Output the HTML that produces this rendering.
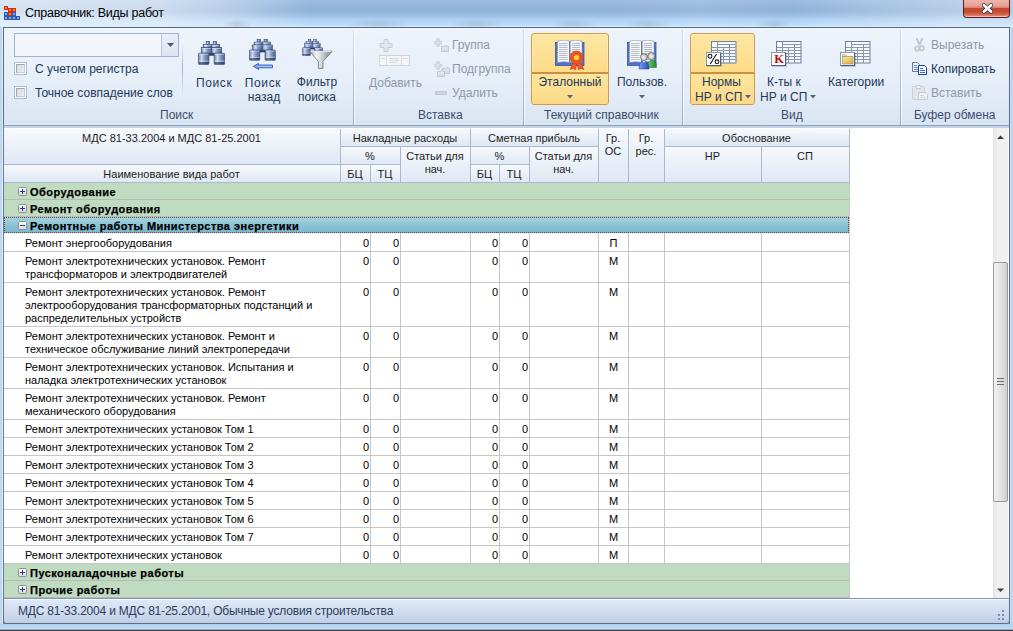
<!DOCTYPE html><html><head><meta charset="utf-8"><style>
*{margin:0;padding:0;box-sizing:border-box}
html,body{width:1013px;height:631px;overflow:hidden;background:#b9d1ec;font-family:"Liberation Sans",sans-serif}
.a{position:absolute}
</style></head><body>
<div class="a" style="left:0;top:0;width:1013px;height:28px;background:linear-gradient(#9dbbe0 0,#8fb0d7 38%,#9cbde3 55%,#b2d2f4 72%,#bcdbf9 88%,#c4e0fa 93%,#eaf3fc 96%,#eaf3fc 100%)"></div>
<div class="a" style="left:0;top:0;width:1013px;height:26px;background:linear-gradient(90deg,rgba(240,246,252,.72) 0,rgba(240,246,252,.62) 160px,rgba(240,246,252,.35) 240px,rgba(240,246,252,0) 310px,rgba(240,246,252,0) 600px,rgba(240,246,252,.1) 700px,rgba(240,246,252,0) 790px,rgba(240,246,252,.2) 870px,rgba(240,246,252,.4) 960px,rgba(240,246,252,.35) 1013px)"></div>
<div class="a" style="left:0;top:27px;width:4px;height:604px;background:linear-gradient(90deg,#c4daf2 0,#b8d3f0 2px,#e2eefa 2px,#e2eefa 3px,#5f6f85 3px)"></div>
<div class="a" style="left:1009px;top:27px;width:4px;height:604px;background:linear-gradient(90deg,#5f6f85 0,#5f6f85 25%,#e0ecf8 26%,#b8d4f2 50%,#bcd6f2)"></div>
<div class="a" style="left:0;top:624px;width:1013px;height:7px;background:linear-gradient(#b6d3f2,#b8d6f5 60%,#d8e8f8 72%,#5a6470 86%,#1c1c1c 100%)"></div>
<div class="a" style="left:222px;top:19px;width:30px;height:9px;background:radial-gradient(ellipse at 50% 60%,rgba(70,90,120,.18),rgba(70,90,120,0) 70%)"></div>
<div class="a" style="left:345px;top:19px;width:67px;height:9px;background:radial-gradient(ellipse at 50% 60%,rgba(70,90,120,.18),rgba(70,90,120,0) 70%)"></div>
<div class="a" style="left:448px;top:19px;width:57px;height:9px;background:radial-gradient(ellipse at 50% 60%,rgba(70,90,120,.18),rgba(70,90,120,0) 70%)"></div>
<div class="a" style="left:550px;top:19px;width:48px;height:9px;background:radial-gradient(ellipse at 50% 60%,rgba(70,90,120,.18),rgba(70,90,120,0) 70%)"></div>
<div class="a" style="left:622px;top:19px;width:50px;height:9px;background:radial-gradient(ellipse at 50% 60%,rgba(70,90,120,.18),rgba(70,90,120,0) 70%)"></div>
<div class="a" style="left:755px;top:19px;width:37px;height:9px;background:radial-gradient(ellipse at 50% 60%,rgba(70,90,120,.18),rgba(70,90,120,0) 70%)"></div>
<svg class="a" style="left:0;top:0" width="24" height="24"><rect x="4.5" y="6.5" width="3" height="3" fill="#ff7a55" stroke="#d2300c"/><rect x="8.5" y="8.5" width="3" height="3" fill="#ff7a55" stroke="#d2300c"/><rect x="12.5" y="8.5" width="3" height="3" fill="#ff7a55" stroke="#d2300c"/><rect x="4.5" y="12.5" width="3" height="3" fill="#7fa8ec" stroke="#2c5cb8"/><rect x="8.5" y="12.5" width="3" height="3" fill="#ff7a55" stroke="#d2300c"/><rect x="12.5" y="12.5" width="3" height="3" fill="#7fa8ec" stroke="#2c5cb8"/><rect x="4.5" y="16.5" width="3" height="3" fill="#7fa8ec" stroke="#2c5cb8"/><rect x="8.5" y="16.5" width="3" height="3" fill="#7fa8ec" stroke="#2c5cb8"/><rect x="12.5" y="16.5" width="3" height="3" fill="#7fa8ec" stroke="#2c5cb8"/><rect x="16.5" y="16.5" width="3" height="3" fill="#7fa8ec" stroke="#2c5cb8"/></svg>
<div class="a" style="left:25px;top:5.67px;font-size:12.5px;line-height:15px;color:#000;white-space:nowrap;letter-spacing:-0.25px;">Справочник: Виды работ</div>
<div class="a" style="left:963px;top:0;width:47px;height:18px;border:1px solid #5a1e18;border-top:none;border-radius:0 0 4px 4px;background:linear-gradient(#efb4ab 0,#e6a096 35%,#d98272 45%,#c9472e 50%,#c44a30 70%,#d8705c 88%,#e8a090 100%);box-shadow:inset 0 -1px 0 rgba(255,220,210,.6)"></div>
<svg class="a" style="left:980px;top:2px" width="15" height="13" viewBox="0 0 15 13"><path d="M4 3.3L11 9.5M11 3.3L4 9.5" stroke="#3a3f50" stroke-width="4.4" stroke-linecap="round"/><path d="M4 3.3L11 9.5M11 3.3L4 9.5" stroke="#fafafa" stroke-width="2.8" stroke-linecap="round"/></svg>
<div class="a" style="left:3px;top:27px;width:1007px;height:99px;border:1px solid #5c6a7e;border-bottom:1px solid #8ea3c0;background:linear-gradient(#eef4fb 0,#e6eef8 55%,#dae5f3 100%)"></div>
<div class="a" style="left:4px;top:126px;width:1005px;height:3px;background:#c5d2e3"></div>
<div class="a" style="left:353px;top:30px;width:1px;height:95px;background:linear-gradient(#d2dcea,#b4c3d8 50%,#9aadc6)"></div>
<div class="a" style="left:354px;top:30px;width:1px;height:95px;background:rgba(255,255,255,.75)"></div>
<div class="a" style="left:523px;top:30px;width:1px;height:95px;background:linear-gradient(#d2dcea,#b4c3d8 50%,#9aadc6)"></div>
<div class="a" style="left:524px;top:30px;width:1px;height:95px;background:rgba(255,255,255,.75)"></div>
<div class="a" style="left:682px;top:30px;width:1px;height:95px;background:linear-gradient(#d2dcea,#b4c3d8 50%,#9aadc6)"></div>
<div class="a" style="left:683px;top:30px;width:1px;height:95px;background:rgba(255,255,255,.75)"></div>
<div class="a" style="left:900px;top:30px;width:1px;height:95px;background:linear-gradient(#d2dcea,#b4c3d8 50%,#9aadc6)"></div>
<div class="a" style="left:901px;top:30px;width:1px;height:95px;background:rgba(255,255,255,.75)"></div>
<div class="a" style="left:14px;top:33px;width:165px;height:24px;border:1px solid #a3b3c9;background:#f2f6fc"></div>
<div class="a" style="left:161px;top:34px;width:17px;height:22px;border-left:1px solid #b9c6d8;background:linear-gradient(#e9eff7,#dce5f1)"></div>
<svg class="a" style="left:167px;top:43px" width="8" height="5"><path d="M0 0H7L3.5 4Z" fill="#4a5672"/></svg>
<div class="a" style="left:14px;top:62px;width:13px;height:13px;border:1px solid #a6bedc;background:#fdfdfe"></div>
<div class="a" style="left:16px;top:64px;width:9px;height:9px;border:1px solid #a0a6b0;border-right-color:#c6cad0;border-bottom-color:#c6cad0;background:linear-gradient(135deg,#d6d9de,#eceef1)"></div>
<div class="a" style="left:14px;top:86px;width:13px;height:13px;border:1px solid #a6bedc;background:#fdfdfe"></div>
<div class="a" style="left:16px;top:88px;width:9px;height:9px;border:1px solid #a0a6b0;border-right-color:#c6cad0;border-bottom-color:#c6cad0;background:linear-gradient(135deg,#d6d9de,#eceef1)"></div>
<div class="a" style="left:35px;top:61.84px;font-size:12px;line-height:14px;color:#1e395b;white-space:nowrap;">С учетом регистра</div>
<div class="a" style="left:35px;top:85.84px;font-size:12px;line-height:14px;color:#1e395b;white-space:nowrap;">Точное совпадение слов</div>
<div class="a" style="left:182px;top:43px;width:1px;height:52px;background:linear-gradient(rgba(150,170,200,0),#a4b4cc 45%,#a4b4cc 55%,rgba(150,170,200,0))"></div>
<div class="a" style="left:160px;top:108.34px;font-size:12px;line-height:14px;color:#3d4c6e;white-space:nowrap;">Поиск</div>
<svg class="a" style="left:198px;top:41px" width="27.0" height="24.0" viewBox="0 0 27 24" preserveAspectRatio="none">
<defs><linearGradient id="bn1" x1="0" x2="1"><stop offset="0" stop-color="#6a80b0"/><stop offset=".3" stop-color="#d3ddef"/><stop offset=".55" stop-color="#8ea2c8"/><stop offset="1" stop-color="#4a5f90"/></linearGradient></defs>
<g fill="url(#bn1)" stroke="#3b4b78" stroke-width=".7">
<rect x="8.2" y="0.4" width="3.3" height="3"/><rect x="15.2" y="0.4" width="3.3" height="3"/>
<rect x="5.2" y="3.4" width="8.2" height="3.2"/><rect x="13.4" y="3.4" width="8.3" height="3.2"/>
<rect x="3.3" y="6.6" width="10.1" height="5.6"/><rect x="13.4" y="6.6" width="10.2" height="5.6"/>
<rect x="0.4" y="12.2" width="10.5" height="11.3" rx="1"/><rect x="16.2" y="12.2" width="10.5" height="11.3" rx="1"/>
</g>
<rect x="10.9" y="12.2" width="5.3" height="2.5" fill="#2e3c66"/>
<g fill="#e8eef8" opacity=".55"><rect x="6" y="3.9" width="7" height=".9"/><rect x="14" y="3.9" width="7" height=".9"/><rect x="4" y="7.1" width="9" height=".9"/><rect x="14" y="7.1" width="9" height=".9"/><rect x="1" y="12.8" width="9.5" height="1"/><rect x="16.8" y="12.8" width="9.5" height="1"/><rect x="1" y="19.6" width="9.5" height="1"/><rect x="16.8" y="19.6" width="9.5" height="1"/></g>
<g fill="#1f2a50" opacity=".6"><rect x="1" y="21" width="9.5" height="2"/><rect x="16.8" y="21" width="9.5" height="2"/></g>
</svg>
<div class="a" style="left:196px;top:75.54px;font-size:12px;line-height:14px;color:#1e395b;white-space:nowrap;letter-spacing:0.6px;">Поиск</div>
<svg class="a" style="left:249px;top:39px" width="26.7" height="21.8" viewBox="0 0 27 24" preserveAspectRatio="none">
<defs><linearGradient id="bn2" x1="0" x2="1"><stop offset="0" stop-color="#6a80b0"/><stop offset=".3" stop-color="#d3ddef"/><stop offset=".55" stop-color="#8ea2c8"/><stop offset="1" stop-color="#4a5f90"/></linearGradient></defs>
<g fill="url(#bn2)" stroke="#3b4b78" stroke-width=".7">
<rect x="8.2" y="0.4" width="3.3" height="3"/><rect x="15.2" y="0.4" width="3.3" height="3"/>
<rect x="5.2" y="3.4" width="8.2" height="3.2"/><rect x="13.4" y="3.4" width="8.3" height="3.2"/>
<rect x="3.3" y="6.6" width="10.1" height="5.6"/><rect x="13.4" y="6.6" width="10.2" height="5.6"/>
<rect x="0.4" y="12.2" width="10.5" height="11.3" rx="1"/><rect x="16.2" y="12.2" width="10.5" height="11.3" rx="1"/>
</g>
<rect x="10.9" y="12.2" width="5.3" height="2.5" fill="#2e3c66"/>
<g fill="#e8eef8" opacity=".55"><rect x="6" y="3.9" width="7" height=".9"/><rect x="14" y="3.9" width="7" height=".9"/><rect x="4" y="7.1" width="9" height=".9"/><rect x="14" y="7.1" width="9" height=".9"/><rect x="1" y="12.8" width="9.5" height="1"/><rect x="16.8" y="12.8" width="9.5" height="1"/><rect x="1" y="19.6" width="9.5" height="1"/><rect x="16.8" y="19.6" width="9.5" height="1"/></g>
<g fill="#1f2a50" opacity=".6"><rect x="1" y="21" width="9.5" height="2"/><rect x="16.8" y="21" width="9.5" height="2"/></g>
</svg>
<svg class="a" style="left:253px;top:63px" width="20" height="7" viewBox="0 0 20 7"><path d="M0.4 3.3L5.5 0.4V2H19.5V4.8H5.5V6.4Z" fill="#7aa0ea" stroke="#2250b8" stroke-width=".8"/><path d="M5 3.4H19" stroke="#c8d8f8" stroke-width=".7"/></svg>
<div class="a" style="left:244px;top:75.54px;font-size:12px;line-height:14px;color:#1e395b;white-space:nowrap;letter-spacing:0.6px;width:38px;text-align:center;">Поиск</div>
<div class="a" style="left:245px;top:90.34px;font-size:12px;line-height:14px;color:#1e395b;white-space:nowrap;width:38px;text-align:center;">назад</div>
<svg class="a" style="left:302px;top:39px" width="20.8" height="17.0" viewBox="0 0 27 24" preserveAspectRatio="none">
<defs><linearGradient id="bn3" x1="0" x2="1"><stop offset="0" stop-color="#6a80b0"/><stop offset=".3" stop-color="#d3ddef"/><stop offset=".55" stop-color="#8ea2c8"/><stop offset="1" stop-color="#4a5f90"/></linearGradient></defs>
<g fill="url(#bn3)" stroke="#3b4b78" stroke-width=".7">
<rect x="8.2" y="0.4" width="3.3" height="3"/><rect x="15.2" y="0.4" width="3.3" height="3"/>
<rect x="5.2" y="3.4" width="8.2" height="3.2"/><rect x="13.4" y="3.4" width="8.3" height="3.2"/>
<rect x="3.3" y="6.6" width="10.1" height="5.6"/><rect x="13.4" y="6.6" width="10.2" height="5.6"/>
<rect x="0.4" y="12.2" width="10.5" height="11.3" rx="1"/><rect x="16.2" y="12.2" width="10.5" height="11.3" rx="1"/>
</g>
<rect x="10.9" y="12.2" width="5.3" height="2.5" fill="#2e3c66"/>
<g fill="#e8eef8" opacity=".55"><rect x="6" y="3.9" width="7" height=".9"/><rect x="14" y="3.9" width="7" height=".9"/><rect x="4" y="7.1" width="9" height=".9"/><rect x="14" y="7.1" width="9" height=".9"/><rect x="1" y="12.8" width="9.5" height="1"/><rect x="16.8" y="12.8" width="9.5" height="1"/><rect x="1" y="19.6" width="9.5" height="1"/><rect x="16.8" y="19.6" width="9.5" height="1"/></g>
<g fill="#1f2a50" opacity=".6"><rect x="1" y="21" width="9.5" height="2"/><rect x="16.8" y="21" width="9.5" height="2"/></g>
</svg>
<svg class="a" style="left:309px;top:50px" width="24" height="19" viewBox="0 0 24 19"><defs><linearGradient id="fn" x1="0" x2="1"><stop offset="0" stop-color="#8e949c"/><stop offset=".3" stop-color="#f4f6f8"/><stop offset=".6" stop-color="#c4c8cd"/><stop offset="1" stop-color="#7a8089"/></linearGradient></defs>
<path d="M0.5 1.2H23.2L14 11.5V18.4H9.4V11.5Z" fill="url(#fn)" stroke="#6e747c" stroke-width=".8"/><path d="M1.5 1.6H22.2" stroke="#fff" stroke-width=".8"/></svg>
<div class="a" style="left:294px;top:74.84px;font-size:12px;line-height:14px;color:#1e395b;white-space:nowrap;width:46px;text-align:center;">Фильтр</div>
<div class="a" style="left:294px;top:90.34px;font-size:12px;line-height:14px;color:#1e395b;white-space:nowrap;width:46px;text-align:center;">поиска</div>
<svg class="a" style="left:379px;top:39px" width="32" height="28" viewBox="0 0 32 28">
<path d="M5 0.5H9V4.5H13V8.5H9V12.5H5V8.5H1V4.5H5Z" fill="#e2e6ea" stroke="#c5cbd2"/>
<rect x="0.5" y="16.5" width="30" height="10" fill="#f4f6f8" stroke="#cfd4da"/>
<path d="M7.5 16.5V26.5M22.5 16.5V26.5M10 19.5H20M10 21.5H20M10 23.5H18M2 19.5H6M24 19.5H29" stroke="#d6dadf"/></svg>
<div class="a" style="left:369px;top:75.64px;font-size:12px;line-height:14px;color:#8f98a8;white-space:nowrap;">Добавить</div>
<svg class="a" style="left:434px;top:38px" width="17" height="17" viewBox="0 0 17 17"><path d="M2.8 .8H5.2V3.3H7.7V5.7H5.2V8.2H2.8V5.7H.3V3.3H2.8Z" fill="#dfe2e6" stroke="#c4c9cf" stroke-width=".8"/><path d="M7.5 8.5H10.5L11.5 7.5H13L13.5 8.5H14.5V13.5H7.5Z" fill="#dadde1" stroke="#c0c5cb" stroke-width=".9"/><path d="M8 10H14" stroke="#eef0f2" stroke-width=".8"/></svg>
<div class="a" style="left:452px;top:38.14px;font-size:12px;line-height:14px;color:#8f98a8;white-space:nowrap;">Группа</div>
<svg class="a" style="left:434px;top:61px" width="17" height="17" viewBox="0 0 17 17"><path d="M2.8 .8H5.2V3.3H7.7V5.7H5.2V8.2H2.8V5.7H.3V3.3H2.8Z" fill="#dfe2e6" stroke="#c4c9cf" stroke-width=".8"/><path d="M8.5 7.5H11.5L12.5 6.5H14L14.5 7.5H15.5V12.5H8.5Z" fill="#dadde1" stroke="#c0c5cb" stroke-width=".9"/><path d="M9 9H15" stroke="#eef0f2" stroke-width=".8"/><path d="M3.5 10.5H6.5L7.5 9.5H9L9.5 10.5H10.5V15.5H3.5Z" fill="#dadde1" stroke="#c0c5cb" stroke-width=".9"/><path d="M4 12H10" stroke="#eef0f2" stroke-width=".8"/></svg>
<div class="a" style="left:452px;top:61.84px;font-size:12px;line-height:14px;color:#8f98a8;white-space:nowrap;">Подгруппа</div>
<div class="a" style="left:435px;top:91px;width:12px;height:4px;background:#d0d5db;border:1px solid #c2c8cf"></div>
<div class="a" style="left:452px;top:86.14px;font-size:12px;line-height:14px;color:#8f98a8;white-space:nowrap;">Удалить</div>
<div class="a" style="left:418px;top:108.34px;font-size:12px;line-height:14px;color:#3d4c6e;white-space:nowrap;">Вставка</div>
<div class="a" style="left:531px;top:33px;width:78px;height:72px;border:1px solid #d09a4c;border-radius:3px;box-shadow:inset 0 0 0 1px rgba(255,240,190,.55);background:linear-gradient(#fde6a2,#fddc88 55%,#fcd57c)"></div>
<div class="a" style="left:532px;top:72px;width:76px;height:2px;background:#cc9040"></div>
<div class="a" style="left:532px;top:74px;width:76px;height:30px;border-radius:0 0 2px 2px;background:linear-gradient(#fde49c,#fddf92 60%,#fcd886)"></div>
<svg class="a" style="left:555px;top:40px" width="30" height="26" viewBox="0 0 30 26">
<rect x="0.5" y="2.5" width="28.5" height="23" fill="#4b72cc" stroke="#3558b0" stroke-width=".8"/>
<path d="M2.5 1Q8.5 -0.6 14.5 1V22.5Q8.5 21 2.5 22.5Z" fill="#f7f9fc" stroke="#8a96ac" stroke-width=".6"/>
<path d="M27 1Q21 -0.6 15 1V22.5Q21 21 27 22.5Z" fill="#f2f5f9" stroke="#8a96ac" stroke-width=".6"/>
<path d="M14.5 1V23M15 1V23" stroke="#5a6680" stroke-width=".5"/>
<path d="M4 3.5H12.5M17 3.5H25M4 5.5H12.5M17 5.5H25M4 7.5H12.5M17 7.5H25M4 9.5H12.5M17 9.5H25M4 11.5H12.5M17 11.5H25M4 13.5H12.5M17 13.5H25M4 15.5H12.5M17 15.5H25M4 17.5H12.5M17 17.5H25M4 19.5H12.5M17 19.5H25" stroke="#b3bccb" stroke-width="1"/>
</svg>
<svg class="a" style="left:569px;top:50px" width="16" height="21" viewBox="0 0 16 21">
<path d="M5 11L1 19.5L4.5 18.5L6.5 20L8 13ZM11 11L15 19.5L11.5 18.5L9.5 20L8 13Z" fill="#ee5a2a" stroke="#b8300f" stroke-width=".5"/>
<circle cx="7.5" cy="7.5" r="6.5" fill="#f05a28" stroke="#c63a12" stroke-width=".6"/><circle cx="7.5" cy="7.5" r="4.6" fill="none" stroke="#d8441a" stroke-width=".6"/><circle cx="7.5" cy="7.5" r="2.6" fill="#f8d84a" stroke="#e8a820" stroke-width=".5"/></svg>
<div class="a" style="left:531px;top:74.84px;font-size:12px;line-height:14px;color:#1e395b;white-space:nowrap;width:78px;text-align:center;">Эталонный</div>
<svg class="a" style="left:567px;top:95px" width="7" height="4"><path d="M0 0H6L3 3.5Z" fill="#5a6478"/></svg>
<svg class="a" style="left:627px;top:40px" width="30" height="26" viewBox="0 0 30 26">
<rect x="0.5" y="2.5" width="28.5" height="23" fill="#4b72cc" stroke="#3558b0" stroke-width=".8"/>
<path d="M2.5 1Q8.5 -0.6 14.5 1V22.5Q8.5 21 2.5 22.5Z" fill="#f7f9fc" stroke="#8a96ac" stroke-width=".6"/>
<path d="M27 1Q21 -0.6 15 1V22.5Q21 21 27 22.5Z" fill="#f2f5f9" stroke="#8a96ac" stroke-width=".6"/>
<path d="M14.5 1V23M15 1V23" stroke="#5a6680" stroke-width=".5"/>
<path d="M4 3.5H12.5M17 3.5H25M4 5.5H12.5M17 5.5H25M4 7.5H12.5M17 7.5H25M4 9.5H12.5M17 9.5H25M4 11.5H12.5M17 11.5H25M4 13.5H12.5M17 13.5H25M4 15.5H12.5M17 15.5H25M4 17.5H12.5M17 17.5H25M4 19.5H12.5M17 19.5H25" stroke="#b3bccb" stroke-width="1"/>
</svg>
<svg class="a" style="left:638px;top:51px" width="20" height="19" viewBox="0 0 20 19">
<defs><radialGradient id="hd" cx=".45" cy=".55" r=".6"><stop offset="0" stop-color="#fafafa"/><stop offset=".6" stop-color="#c8c8c8"/><stop offset="1" stop-color="#6a6a6a"/></radialGradient>
<linearGradient id="gb" x1="0" x2="1"><stop offset="0" stop-color="#6ad06a"/><stop offset="1" stop-color="#1f8a2a"/></linearGradient>
<linearGradient id="bb" x1="0" x2="1"><stop offset="0" stop-color="#7fa0f0"/><stop offset="1" stop-color="#2a4cb0"/></linearGradient></defs>
<path d="M9.5 16.5Q9.5 9 14 9Q18.5 9 18.5 16.5Z" fill="url(#gb)" stroke="#1d6e22" stroke-width=".5"/>
<circle cx="13.5" cy="5" r="3.6" fill="url(#hd)" stroke="#5a5a5a" stroke-width=".5"/>
<path d="M1 18Q1 10 6 10Q11 10 11 18Z" fill="url(#bb)" stroke="#23409a" stroke-width=".5"/>
<path d="M5 10L6 12L7 10Z" fill="#fff"/>
<circle cx="6" cy="6" r="3.6" fill="url(#hd)" stroke="#5a5a5a" stroke-width=".5"/>
</svg>
<div class="a" style="left:612px;top:74.84px;font-size:12px;line-height:14px;color:#1e395b;white-space:nowrap;width:60px;text-align:center;">Пользов.</div>
<svg class="a" style="left:639px;top:95px" width="7" height="4"><path d="M0 0H6L3 3.5Z" fill="#5a6478"/></svg>
<div class="a" style="left:544px;top:108.34px;font-size:12px;line-height:14px;color:#3d4c6e;white-space:nowrap;">Текущий справочник</div>
<div class="a" style="left:690px;top:33px;width:65px;height:72px;border:1px solid #d09a4c;border-radius:3px;box-shadow:inset 0 0 0 1px rgba(255,240,190,.55);background:linear-gradient(#fde6a2,#fddc88 55%,#fcd57c)"></div>
<div class="a" style="left:691px;top:72px;width:63px;height:2px;background:#cc9040"></div>
<div class="a" style="left:691px;top:74px;width:63px;height:30px;border-radius:0 0 2px 2px;background:linear-gradient(#fde49c,#fddf92 60%,#fcd886)"></div>
<svg class="a" style="left:711px;top:41px" width="26" height="23" viewBox="0 0 26 23">
<rect x="0.5" y="0.5" width="24.5" height="21.5" fill="#f6f8fb" stroke="#6f809e"/>
<g stroke="#8797b2" stroke-width="1"><path d="M6.5 1V22M12.5 6.5V22M18.5 3.5V22M6.5 3.5H25M1 6.5H25M1 9.5H25M1 12.5H25M1 15.5H25M1 18.5H25"/></g></svg>
<div class="a" style="left:706px;top:52px;width:15px;height:14px;background:#fff;border:1px solid #8a9ab4;border-right-color:#4f6080;border-bottom-color:#4f6080;box-shadow:1px 1px 0 rgba(60,70,90,.25)"></div>
<svg class="a" style="left:707px;top:53px" width="13" height="12" viewBox="0 0 13 12"><circle cx="3" cy="3.2" r="1.9" fill="none" stroke="#111" stroke-width="1.1"/><circle cx="10" cy="8.8" r="1.9" fill="none" stroke="#111" stroke-width="1.1"/><path d="M9.5 1L3.3 11" stroke="#111" stroke-width="1.1"/></svg>
<div class="a" style="left:702px;top:74.84px;font-size:12px;line-height:14px;color:#1e395b;white-space:nowrap;">Нормы</div>
<div class="a" style="left:695px;top:89.84px;font-size:12px;line-height:14px;color:#1e395b;white-space:nowrap;">НР и СП</div>
<svg class="a" style="left:745px;top:95px" width="7" height="4"><path d="M0 0H6L3 3.5Z" fill="#5a6478"/></svg>
<svg class="a" style="left:776px;top:41px" width="26" height="23" viewBox="0 0 26 23">
<rect x="0.5" y="0.5" width="24.5" height="21.5" fill="#f6f8fb" stroke="#6f809e"/>
<g stroke="#8797b2" stroke-width="1"><path d="M6.5 1V22M12.5 6.5V22M18.5 3.5V22M6.5 3.5H25M1 6.5H25M1 9.5H25M1 12.5H25M1 15.5H25M1 18.5H25"/></g></svg>
<div class="a" style="left:771px;top:52px;width:15px;height:14px;background:#fff;border:1px solid #8a9ab4;border-right-color:#4f6080;border-bottom-color:#4f6080;box-shadow:1px 1px 0 rgba(60,70,90,.25)"></div>
<div class="a" style="left:772px;top:52px;width:14px;text-align:center;font-family:'Liberation Serif',serif;font-weight:bold;font-size:12.5px;line-height:14px;color:#b80e0e">K</div>
<div class="a" style="left:767px;top:74.54px;font-size:12px;line-height:14px;color:#1e395b;white-space:nowrap;">К-ты к</div>
<div class="a" style="left:760px;top:89.84px;font-size:12px;line-height:14px;color:#1e395b;white-space:nowrap;">НР и СП</div>
<svg class="a" style="left:810px;top:95px" width="7" height="4"><path d="M0 0H6L3 3.5Z" fill="#5a6478"/></svg>
<svg class="a" style="left:845px;top:41px" width="26" height="23" viewBox="0 0 26 23">
<rect x="0.5" y="0.5" width="24.5" height="21.5" fill="#f6f8fb" stroke="#6f809e"/>
<g stroke="#8797b2" stroke-width="1"><path d="M6.5 1V22M12.5 6.5V22M18.5 3.5V22M6.5 3.5H25M1 6.5H25M1 9.5H25M1 12.5H25M1 15.5H25M1 18.5H25"/></g></svg>
<div class="a" style="left:840px;top:52px;width:15px;height:14px;background:#fff;border:1px solid #8a9ab4;border-right-color:#4f6080;border-bottom-color:#4f6080;box-shadow:1px 1px 0 rgba(60,70,90,.25)"></div>
<svg class="a" style="left:841px;top:53px" width="13" height="12" viewBox="0 0 13 12"><defs><linearGradient id="fd" x1="0" y1="0" x2="1" y2="1"><stop offset="0" stop-color="#f8eeb0"/><stop offset="1" stop-color="#d8ac38"/></linearGradient></defs><path d="M1.5 1.5H4.5L5.5 2.5V3.5H1.5Z" fill="#efe0a0" stroke="#b09a60" stroke-width=".6"/><rect x="1.5" y="3.5" width="10.5" height="7.5" fill="url(#fd)" stroke="#9a8450" stroke-width=".6"/></svg>
<div class="a" style="left:828px;top:74.54px;font-size:12px;line-height:14px;color:#1e395b;white-space:nowrap;">Категории</div>
<div class="a" style="left:781px;top:108.34px;font-size:12px;line-height:14px;color:#3d4c6e;white-space:nowrap;">Вид</div>
<svg class="a" style="left:914px;top:37px" width="11" height="15" viewBox="0 0 11 15">
<path d="M2.3 1L6 8.5M8.7 1L5 8.5" stroke="#c4c8cd" stroke-width="1.9"/><circle cx="3.2" cy="11.6" r="2.1" fill="none" stroke="#c4c8cd" stroke-width="1.7"/><circle cx="7.8" cy="11.3" r="2.1" fill="none" stroke="#c4c8cd" stroke-width="1.7"/></svg>
<div class="a" style="left:931px;top:37.64px;font-size:12px;line-height:14px;color:#8f98a8;white-space:nowrap;">Вырезать</div>
<svg class="a" style="left:912px;top:62px" width="16" height="14" viewBox="0 0 16 14">
<path d="M0.5 0.5H5.5L7.5 2.5V9.5H0.5Z" fill="#f4f7fc" stroke="#6a7898"/><path d="M2 3.5H5M2 5.5H6M2 7.5H6" stroke="#5a88e0"/>
<path d="M6.5 3.5H12.5L14.5 5.5V12.5H6.5Z" fill="#fafcff" stroke="#1f3f9f"/><path d="M8 6.5H11M8 8.5H13M8 10.5H13" stroke="#3a6ad8"/></svg>
<div class="a" style="left:931px;top:61.54px;font-size:12px;line-height:14px;color:#1e395b;white-space:nowrap;">Копировать</div>
<svg class="a" style="left:912px;top:85px" width="17" height="16" viewBox="0 0 17 16">
<rect x="0.5" y="1.5" width="12" height="13" rx="1" fill="#e2e5e9" stroke="#cdd1d6"/><rect x="4" y="0.5" width="5" height="3" rx="1" fill="#eef0f3" stroke="#c4c8ce"/>
<path d="M6.5 7.5H13.5L15.5 9.5V14.5H6.5Z" fill="#eff1f4" stroke="#c6cbd1"/><path d="M8 10.5H12M8 12.5H14" stroke="#d2d6db"/></svg>
<div class="a" style="left:931px;top:86.24px;font-size:12px;line-height:14px;color:#8f98a8;white-space:nowrap;">Вставить</div>
<div class="a" style="left:914px;top:108.34px;font-size:12px;line-height:14px;color:#3d4c6e;white-space:nowrap;">Буфер обмена</div>
<div class="a" style="left:3px;top:128px;width:1006px;height:470px;background:#fff;border-left:1px solid #6b7a90"></div>
<div class="a" style="left:4px;top:129px;width:337px;height:36px;background:linear-gradient(#f6f9fd,#dfe8f4);border-right:1px solid #a9b9cf;border-bottom:1px solid #a9b9cf;"></div>
<div class="a" style="left:4px;top:165px;width:337px;height:18px;background:linear-gradient(#f6f9fd,#dfe8f4);border-right:1px solid #a9b9cf;border-bottom:1px solid #a9b9cf;"></div>
<div class="a" style="left:3px;top:132.09px;font-size:11px;line-height:13px;color:#1c1c1c;white-space:nowrap;width:337px;text-align:center;">МДС 81-33.2004 и МДС 81-25.2001</div>
<div class="a" style="left:3px;top:168.19px;font-size:11px;line-height:13px;color:#1c1c1c;white-space:nowrap;width:337px;text-align:center;">Наименование вида работ</div>
<div class="a" style="left:341px;top:129px;width:130px;height:18px;background:linear-gradient(#f6f9fd,#dfe8f4);border-right:1px solid #a9b9cf;border-bottom:1px solid #a9b9cf;"></div>
<div class="a" style="left:340px;top:132.09px;font-size:11px;line-height:13px;color:#1c1c1c;white-space:nowrap;width:130px;text-align:center;">Накладные расходы</div>
<div class="a" style="left:341px;top:147px;width:60px;height:18px;background:linear-gradient(#f6f9fd,#dfe8f4);border-right:1px solid #a9b9cf;border-bottom:1px solid #a9b9cf;"></div>
<div class="a" style="left:340px;top:150.19px;font-size:11px;line-height:13px;color:#1c1c1c;white-space:nowrap;width:60px;text-align:center;">%</div>
<div class="a" style="left:341px;top:165px;width:30px;height:18px;background:linear-gradient(#f6f9fd,#dfe8f4);border-right:1px solid #a9b9cf;border-bottom:1px solid #a9b9cf;"></div>
<div class="a" style="left:371px;top:165px;width:30px;height:18px;background:linear-gradient(#f6f9fd,#dfe8f4);border-right:1px solid #a9b9cf;border-bottom:1px solid #a9b9cf;"></div>
<div class="a" style="left:340px;top:168.19px;font-size:11px;line-height:13px;color:#1c1c1c;white-space:nowrap;width:30px;text-align:center;">БЦ</div>
<div class="a" style="left:370px;top:168.19px;font-size:11px;line-height:13px;color:#1c1c1c;white-space:nowrap;width:30px;text-align:center;">ТЦ</div>
<div class="a" style="left:401px;top:147px;width:70px;height:36px;background:linear-gradient(#f6f9fd,#dfe8f4);border-right:1px solid #a9b9cf;border-bottom:1px solid #a9b9cf;"></div>
<div class="a" style="left:400px;top:150.19px;font-size:11px;line-height:13px;color:#1c1c1c;white-space:nowrap;width:70px;text-align:center;">Статьи для</div>
<div class="a" style="left:400px;top:162.69px;font-size:11px;line-height:13px;color:#1c1c1c;white-space:nowrap;width:70px;text-align:center;">нач.</div>
<div class="a" style="left:471px;top:129px;width:128px;height:18px;background:linear-gradient(#f6f9fd,#dfe8f4);border-right:1px solid #a9b9cf;border-bottom:1px solid #a9b9cf;"></div>
<div class="a" style="left:470px;top:132.09px;font-size:11px;line-height:13px;color:#1c1c1c;white-space:nowrap;width:128px;text-align:center;">Сметная прибыль</div>
<div class="a" style="left:471px;top:147px;width:59px;height:18px;background:linear-gradient(#f6f9fd,#dfe8f4);border-right:1px solid #a9b9cf;border-bottom:1px solid #a9b9cf;"></div>
<div class="a" style="left:470px;top:150.19px;font-size:11px;line-height:13px;color:#1c1c1c;white-space:nowrap;width:59px;text-align:center;">%</div>
<div class="a" style="left:471px;top:165px;width:29px;height:18px;background:linear-gradient(#f6f9fd,#dfe8f4);border-right:1px solid #a9b9cf;border-bottom:1px solid #a9b9cf;"></div>
<div class="a" style="left:500px;top:165px;width:30px;height:18px;background:linear-gradient(#f6f9fd,#dfe8f4);border-right:1px solid #a9b9cf;border-bottom:1px solid #a9b9cf;"></div>
<div class="a" style="left:470px;top:168.19px;font-size:11px;line-height:13px;color:#1c1c1c;white-space:nowrap;width:29px;text-align:center;">БЦ</div>
<div class="a" style="left:499px;top:168.19px;font-size:11px;line-height:13px;color:#1c1c1c;white-space:nowrap;width:30px;text-align:center;">ТЦ</div>
<div class="a" style="left:530px;top:147px;width:69px;height:36px;background:linear-gradient(#f6f9fd,#dfe8f4);border-right:1px solid #a9b9cf;border-bottom:1px solid #a9b9cf;"></div>
<div class="a" style="left:529px;top:150.19px;font-size:11px;line-height:13px;color:#1c1c1c;white-space:nowrap;width:69px;text-align:center;">Статьи для</div>
<div class="a" style="left:529px;top:162.69px;font-size:11px;line-height:13px;color:#1c1c1c;white-space:nowrap;width:69px;text-align:center;">нач.</div>
<div class="a" style="left:599px;top:129px;width:30px;height:54px;background:linear-gradient(#f6f9fd,#dfe8f4);border-right:1px solid #a9b9cf;border-bottom:1px solid #a9b9cf;"></div>
<div class="a" style="left:598px;top:132.09px;font-size:11px;line-height:13px;color:#1c1c1c;white-space:nowrap;width:30px;text-align:center;">Гр.</div>
<div class="a" style="left:598px;top:144.69px;font-size:11px;line-height:13px;color:#1c1c1c;white-space:nowrap;width:30px;text-align:center;">ОС</div>
<div class="a" style="left:629px;top:129px;width:36px;height:54px;background:linear-gradient(#f6f9fd,#dfe8f4);border-right:1px solid #a9b9cf;border-bottom:1px solid #a9b9cf;"></div>
<div class="a" style="left:628px;top:132.09px;font-size:11px;line-height:13px;color:#1c1c1c;white-space:nowrap;width:36px;text-align:center;">Гр.</div>
<div class="a" style="left:628px;top:144.69px;font-size:11px;line-height:13px;color:#1c1c1c;white-space:nowrap;width:36px;text-align:center;">рес.</div>
<div class="a" style="left:665px;top:129px;width:185px;height:18px;background:linear-gradient(#f6f9fd,#dfe8f4);border-right:1px solid #a9b9cf;border-bottom:1px solid #a9b9cf;"></div>
<div class="a" style="left:664px;top:132.09px;font-size:11px;line-height:13px;color:#1c1c1c;white-space:nowrap;width:185px;text-align:center;">Обоснование</div>
<div class="a" style="left:665px;top:147px;width:97px;height:36px;background:linear-gradient(#f6f9fd,#dfe8f4);border-right:1px solid #a9b9cf;border-bottom:1px solid #a9b9cf;"></div>
<div class="a" style="left:762px;top:147px;width:88px;height:36px;background:linear-gradient(#f6f9fd,#dfe8f4);border-right:1px solid #a9b9cf;border-bottom:1px solid #a9b9cf;"></div>
<div class="a" style="left:664px;top:150.19px;font-size:11px;line-height:13px;color:#1c1c1c;white-space:nowrap;width:97px;text-align:center;">НР</div>
<div class="a" style="left:761px;top:150.19px;font-size:11px;line-height:13px;color:#1c1c1c;white-space:nowrap;width:88px;text-align:center;">СП</div>
<div class="a" style="left:4px;top:183px;width:845px;height:17px;background:#c0dcc0;border-bottom:1px solid #b9b9b9"></div>
<div class="a" style="left:849px;top:183px;width:1px;height:17px;background:#c6c6c6"></div>
<svg class="a" style="left:18px;top:187px" width="9" height="9" viewBox="0 0 9 9">
<defs><linearGradient id="pb" x1="0" y1="0" x2="0" y2="1"><stop offset="0" stop-color="#fff"/><stop offset="1" stop-color="#d8d8d8"/></linearGradient></defs>
<rect x=".5" y=".5" width="8" height="8" rx="1" fill="url(#pb)" stroke="#8f8f8f"/>
<path d="M2 4.5H7M4.5 2V7" stroke="#2c3c8c"/></svg>
<div class="a" style="left:30px;top:186.19px;font-size:11px;line-height:13px;color:#000;white-space:nowrap;font-weight:bold;letter-spacing:0.47px;-webkit-text-stroke:0.25px #000;">Оборудование</div>
<div class="a" style="left:4px;top:200px;width:845px;height:17px;background:#c0dcc0;border-bottom:1px solid #b9b9b9"></div>
<div class="a" style="left:849px;top:200px;width:1px;height:17px;background:#c6c6c6"></div>
<svg class="a" style="left:18px;top:204px" width="9" height="9" viewBox="0 0 9 9">
<defs><linearGradient id="pb" x1="0" y1="0" x2="0" y2="1"><stop offset="0" stop-color="#fff"/><stop offset="1" stop-color="#d8d8d8"/></linearGradient></defs>
<rect x=".5" y=".5" width="8" height="8" rx="1" fill="url(#pb)" stroke="#8f8f8f"/>
<path d="M2 4.5H7M4.5 2V7" stroke="#2c3c8c"/></svg>
<div class="a" style="left:30px;top:203.19px;font-size:11px;line-height:13px;color:#000;white-space:nowrap;font-weight:bold;letter-spacing:0.47px;-webkit-text-stroke:0.25px #000;">Ремонт оборудования</div>
<div class="a" style="left:4px;top:217px;width:845px;height:16px;background:linear-gradient(#a6d3dc,#78b5d1)"></div>
<div class="a" style="left:4px;top:217px;width:845px;height:16px;border:1px dotted #6e4a3a"></div>
<div class="a" style="left:4px;top:233px;width:845px;height:1px;background:#f4f4f4"></div>
<div class="a" style="left:849px;top:217px;width:1px;height:17px;background:#c6c6c6"></div>
<svg class="a" style="left:18px;top:221px" width="9" height="9" viewBox="0 0 9 9">
<defs><linearGradient id="pb" x1="0" y1="0" x2="0" y2="1"><stop offset="0" stop-color="#fff"/><stop offset="1" stop-color="#d8d8d8"/></linearGradient></defs>
<rect x=".5" y=".5" width="8" height="8" rx="1" fill="url(#pb)" stroke="#8f8f8f"/>
<path d="M2 4.5H7" stroke="#2c3c8c"/></svg>
<div class="a" style="left:30px;top:220.19px;font-size:11px;line-height:13px;color:#000;white-space:nowrap;font-weight:bold;letter-spacing:0.47px;-webkit-text-stroke:0.25px #000;">Ремонтные работы Министерства энергетики</div>
<div class="a" style="left:4px;top:251px;width:846px;height:1px;background:#c6c6c6"></div>
<div class="a" style="left:340px;top:233px;width:1px;height:19px;background:#c6c6c6"></div>
<div class="a" style="left:370px;top:233px;width:1px;height:19px;background:#c6c6c6"></div>
<div class="a" style="left:400px;top:233px;width:1px;height:19px;background:#c6c6c6"></div>
<div class="a" style="left:470px;top:233px;width:1px;height:19px;background:#c6c6c6"></div>
<div class="a" style="left:499px;top:233px;width:1px;height:19px;background:#c6c6c6"></div>
<div class="a" style="left:529px;top:233px;width:1px;height:19px;background:#c6c6c6"></div>
<div class="a" style="left:598px;top:233px;width:1px;height:19px;background:#c6c6c6"></div>
<div class="a" style="left:628px;top:233px;width:1px;height:19px;background:#c6c6c6"></div>
<div class="a" style="left:664px;top:233px;width:1px;height:19px;background:#c6c6c6"></div>
<div class="a" style="left:761px;top:233px;width:1px;height:19px;background:#c6c6c6"></div>
<div class="a" style="left:849px;top:233px;width:1px;height:19px;background:#c6c6c6"></div>
<div class="a" style="left:25px;top:237.19px;font-size:11px;line-height:13px;color:#000;white-space:nowrap;">Ремонт энергооборудования</div>
<div class="a" style="left:342px;top:237.19px;font-size:11px;line-height:13px;color:#000;white-space:nowrap;width:27px;text-align:right;">0</div>
<div class="a" style="left:372px;top:237.19px;font-size:11px;line-height:13px;color:#000;white-space:nowrap;width:27px;text-align:right;">0</div>
<div class="a" style="left:472px;top:237.19px;font-size:11px;line-height:13px;color:#000;white-space:nowrap;width:26px;text-align:right;">0</div>
<div class="a" style="left:501px;top:237.19px;font-size:11px;line-height:13px;color:#000;white-space:nowrap;width:27px;text-align:right;">0</div>
<div class="a" style="left:599px;top:237.19px;font-size:11px;line-height:13px;color:#000;white-space:nowrap;width:29px;text-align:center;">П</div>
<div class="a" style="left:4px;top:282px;width:846px;height:1px;background:#c6c6c6"></div>
<div class="a" style="left:340px;top:251px;width:1px;height:32px;background:#c6c6c6"></div>
<div class="a" style="left:370px;top:251px;width:1px;height:32px;background:#c6c6c6"></div>
<div class="a" style="left:400px;top:251px;width:1px;height:32px;background:#c6c6c6"></div>
<div class="a" style="left:470px;top:251px;width:1px;height:32px;background:#c6c6c6"></div>
<div class="a" style="left:499px;top:251px;width:1px;height:32px;background:#c6c6c6"></div>
<div class="a" style="left:529px;top:251px;width:1px;height:32px;background:#c6c6c6"></div>
<div class="a" style="left:598px;top:251px;width:1px;height:32px;background:#c6c6c6"></div>
<div class="a" style="left:628px;top:251px;width:1px;height:32px;background:#c6c6c6"></div>
<div class="a" style="left:664px;top:251px;width:1px;height:32px;background:#c6c6c6"></div>
<div class="a" style="left:761px;top:251px;width:1px;height:32px;background:#c6c6c6"></div>
<div class="a" style="left:849px;top:251px;width:1px;height:32px;background:#c6c6c6"></div>
<div class="a" style="left:25px;top:255.19px;font-size:11px;line-height:13px;color:#000;white-space:nowrap;">Ремонт электротехнических установок. Ремонт</div>
<div class="a" style="left:25px;top:268.19px;font-size:11px;line-height:13px;color:#000;white-space:nowrap;">трансформаторов и электродвигателей</div>
<div class="a" style="left:342px;top:255.19px;font-size:11px;line-height:13px;color:#000;white-space:nowrap;width:27px;text-align:right;">0</div>
<div class="a" style="left:372px;top:255.19px;font-size:11px;line-height:13px;color:#000;white-space:nowrap;width:27px;text-align:right;">0</div>
<div class="a" style="left:472px;top:255.19px;font-size:11px;line-height:13px;color:#000;white-space:nowrap;width:26px;text-align:right;">0</div>
<div class="a" style="left:501px;top:255.19px;font-size:11px;line-height:13px;color:#000;white-space:nowrap;width:27px;text-align:right;">0</div>
<div class="a" style="left:599px;top:255.19px;font-size:11px;line-height:13px;color:#000;white-space:nowrap;width:29px;text-align:center;">М</div>
<div class="a" style="left:4px;top:326px;width:846px;height:1px;background:#c6c6c6"></div>
<div class="a" style="left:340px;top:282px;width:1px;height:45px;background:#c6c6c6"></div>
<div class="a" style="left:370px;top:282px;width:1px;height:45px;background:#c6c6c6"></div>
<div class="a" style="left:400px;top:282px;width:1px;height:45px;background:#c6c6c6"></div>
<div class="a" style="left:470px;top:282px;width:1px;height:45px;background:#c6c6c6"></div>
<div class="a" style="left:499px;top:282px;width:1px;height:45px;background:#c6c6c6"></div>
<div class="a" style="left:529px;top:282px;width:1px;height:45px;background:#c6c6c6"></div>
<div class="a" style="left:598px;top:282px;width:1px;height:45px;background:#c6c6c6"></div>
<div class="a" style="left:628px;top:282px;width:1px;height:45px;background:#c6c6c6"></div>
<div class="a" style="left:664px;top:282px;width:1px;height:45px;background:#c6c6c6"></div>
<div class="a" style="left:761px;top:282px;width:1px;height:45px;background:#c6c6c6"></div>
<div class="a" style="left:849px;top:282px;width:1px;height:45px;background:#c6c6c6"></div>
<div class="a" style="left:25px;top:286.19px;font-size:11px;line-height:13px;color:#000;white-space:nowrap;">Ремонт электротехнических установок. Ремонт</div>
<div class="a" style="left:25px;top:299.19px;font-size:11px;line-height:13px;color:#000;white-space:nowrap;">электрооборудования трансформаторных подстанций и</div>
<div class="a" style="left:25px;top:312.19px;font-size:11px;line-height:13px;color:#000;white-space:nowrap;">распределительных устройств</div>
<div class="a" style="left:342px;top:286.19px;font-size:11px;line-height:13px;color:#000;white-space:nowrap;width:27px;text-align:right;">0</div>
<div class="a" style="left:372px;top:286.19px;font-size:11px;line-height:13px;color:#000;white-space:nowrap;width:27px;text-align:right;">0</div>
<div class="a" style="left:472px;top:286.19px;font-size:11px;line-height:13px;color:#000;white-space:nowrap;width:26px;text-align:right;">0</div>
<div class="a" style="left:501px;top:286.19px;font-size:11px;line-height:13px;color:#000;white-space:nowrap;width:27px;text-align:right;">0</div>
<div class="a" style="left:599px;top:286.19px;font-size:11px;line-height:13px;color:#000;white-space:nowrap;width:29px;text-align:center;">М</div>
<div class="a" style="left:4px;top:357px;width:846px;height:1px;background:#c6c6c6"></div>
<div class="a" style="left:340px;top:326px;width:1px;height:32px;background:#c6c6c6"></div>
<div class="a" style="left:370px;top:326px;width:1px;height:32px;background:#c6c6c6"></div>
<div class="a" style="left:400px;top:326px;width:1px;height:32px;background:#c6c6c6"></div>
<div class="a" style="left:470px;top:326px;width:1px;height:32px;background:#c6c6c6"></div>
<div class="a" style="left:499px;top:326px;width:1px;height:32px;background:#c6c6c6"></div>
<div class="a" style="left:529px;top:326px;width:1px;height:32px;background:#c6c6c6"></div>
<div class="a" style="left:598px;top:326px;width:1px;height:32px;background:#c6c6c6"></div>
<div class="a" style="left:628px;top:326px;width:1px;height:32px;background:#c6c6c6"></div>
<div class="a" style="left:664px;top:326px;width:1px;height:32px;background:#c6c6c6"></div>
<div class="a" style="left:761px;top:326px;width:1px;height:32px;background:#c6c6c6"></div>
<div class="a" style="left:849px;top:326px;width:1px;height:32px;background:#c6c6c6"></div>
<div class="a" style="left:25px;top:330.19px;font-size:11px;line-height:13px;color:#000;white-space:nowrap;">Ремонт электротехнических установок. Ремонт и</div>
<div class="a" style="left:25px;top:343.19px;font-size:11px;line-height:13px;color:#000;white-space:nowrap;">техническое обслуживание линий электропередачи</div>
<div class="a" style="left:342px;top:330.19px;font-size:11px;line-height:13px;color:#000;white-space:nowrap;width:27px;text-align:right;">0</div>
<div class="a" style="left:372px;top:330.19px;font-size:11px;line-height:13px;color:#000;white-space:nowrap;width:27px;text-align:right;">0</div>
<div class="a" style="left:472px;top:330.19px;font-size:11px;line-height:13px;color:#000;white-space:nowrap;width:26px;text-align:right;">0</div>
<div class="a" style="left:501px;top:330.19px;font-size:11px;line-height:13px;color:#000;white-space:nowrap;width:27px;text-align:right;">0</div>
<div class="a" style="left:599px;top:330.19px;font-size:11px;line-height:13px;color:#000;white-space:nowrap;width:29px;text-align:center;">М</div>
<div class="a" style="left:4px;top:388px;width:846px;height:1px;background:#c6c6c6"></div>
<div class="a" style="left:340px;top:357px;width:1px;height:32px;background:#c6c6c6"></div>
<div class="a" style="left:370px;top:357px;width:1px;height:32px;background:#c6c6c6"></div>
<div class="a" style="left:400px;top:357px;width:1px;height:32px;background:#c6c6c6"></div>
<div class="a" style="left:470px;top:357px;width:1px;height:32px;background:#c6c6c6"></div>
<div class="a" style="left:499px;top:357px;width:1px;height:32px;background:#c6c6c6"></div>
<div class="a" style="left:529px;top:357px;width:1px;height:32px;background:#c6c6c6"></div>
<div class="a" style="left:598px;top:357px;width:1px;height:32px;background:#c6c6c6"></div>
<div class="a" style="left:628px;top:357px;width:1px;height:32px;background:#c6c6c6"></div>
<div class="a" style="left:664px;top:357px;width:1px;height:32px;background:#c6c6c6"></div>
<div class="a" style="left:761px;top:357px;width:1px;height:32px;background:#c6c6c6"></div>
<div class="a" style="left:849px;top:357px;width:1px;height:32px;background:#c6c6c6"></div>
<div class="a" style="left:25px;top:361.19px;font-size:11px;line-height:13px;color:#000;white-space:nowrap;">Ремонт электротехнических установок. Испытания и</div>
<div class="a" style="left:25px;top:374.19px;font-size:11px;line-height:13px;color:#000;white-space:nowrap;">наладка электротехнических установок</div>
<div class="a" style="left:342px;top:361.19px;font-size:11px;line-height:13px;color:#000;white-space:nowrap;width:27px;text-align:right;">0</div>
<div class="a" style="left:372px;top:361.19px;font-size:11px;line-height:13px;color:#000;white-space:nowrap;width:27px;text-align:right;">0</div>
<div class="a" style="left:472px;top:361.19px;font-size:11px;line-height:13px;color:#000;white-space:nowrap;width:26px;text-align:right;">0</div>
<div class="a" style="left:501px;top:361.19px;font-size:11px;line-height:13px;color:#000;white-space:nowrap;width:27px;text-align:right;">0</div>
<div class="a" style="left:599px;top:361.19px;font-size:11px;line-height:13px;color:#000;white-space:nowrap;width:29px;text-align:center;">М</div>
<div class="a" style="left:4px;top:419px;width:846px;height:1px;background:#c6c6c6"></div>
<div class="a" style="left:340px;top:388px;width:1px;height:32px;background:#c6c6c6"></div>
<div class="a" style="left:370px;top:388px;width:1px;height:32px;background:#c6c6c6"></div>
<div class="a" style="left:400px;top:388px;width:1px;height:32px;background:#c6c6c6"></div>
<div class="a" style="left:470px;top:388px;width:1px;height:32px;background:#c6c6c6"></div>
<div class="a" style="left:499px;top:388px;width:1px;height:32px;background:#c6c6c6"></div>
<div class="a" style="left:529px;top:388px;width:1px;height:32px;background:#c6c6c6"></div>
<div class="a" style="left:598px;top:388px;width:1px;height:32px;background:#c6c6c6"></div>
<div class="a" style="left:628px;top:388px;width:1px;height:32px;background:#c6c6c6"></div>
<div class="a" style="left:664px;top:388px;width:1px;height:32px;background:#c6c6c6"></div>
<div class="a" style="left:761px;top:388px;width:1px;height:32px;background:#c6c6c6"></div>
<div class="a" style="left:849px;top:388px;width:1px;height:32px;background:#c6c6c6"></div>
<div class="a" style="left:25px;top:392.19px;font-size:11px;line-height:13px;color:#000;white-space:nowrap;">Ремонт электротехнических установок. Ремонт</div>
<div class="a" style="left:25px;top:405.19px;font-size:11px;line-height:13px;color:#000;white-space:nowrap;">механического оборудования</div>
<div class="a" style="left:342px;top:392.19px;font-size:11px;line-height:13px;color:#000;white-space:nowrap;width:27px;text-align:right;">0</div>
<div class="a" style="left:372px;top:392.19px;font-size:11px;line-height:13px;color:#000;white-space:nowrap;width:27px;text-align:right;">0</div>
<div class="a" style="left:472px;top:392.19px;font-size:11px;line-height:13px;color:#000;white-space:nowrap;width:26px;text-align:right;">0</div>
<div class="a" style="left:501px;top:392.19px;font-size:11px;line-height:13px;color:#000;white-space:nowrap;width:27px;text-align:right;">0</div>
<div class="a" style="left:599px;top:392.19px;font-size:11px;line-height:13px;color:#000;white-space:nowrap;width:29px;text-align:center;">М</div>
<div class="a" style="left:4px;top:437px;width:846px;height:1px;background:#c6c6c6"></div>
<div class="a" style="left:340px;top:419px;width:1px;height:19px;background:#c6c6c6"></div>
<div class="a" style="left:370px;top:419px;width:1px;height:19px;background:#c6c6c6"></div>
<div class="a" style="left:400px;top:419px;width:1px;height:19px;background:#c6c6c6"></div>
<div class="a" style="left:470px;top:419px;width:1px;height:19px;background:#c6c6c6"></div>
<div class="a" style="left:499px;top:419px;width:1px;height:19px;background:#c6c6c6"></div>
<div class="a" style="left:529px;top:419px;width:1px;height:19px;background:#c6c6c6"></div>
<div class="a" style="left:598px;top:419px;width:1px;height:19px;background:#c6c6c6"></div>
<div class="a" style="left:628px;top:419px;width:1px;height:19px;background:#c6c6c6"></div>
<div class="a" style="left:664px;top:419px;width:1px;height:19px;background:#c6c6c6"></div>
<div class="a" style="left:761px;top:419px;width:1px;height:19px;background:#c6c6c6"></div>
<div class="a" style="left:849px;top:419px;width:1px;height:19px;background:#c6c6c6"></div>
<div class="a" style="left:25px;top:423.19px;font-size:11px;line-height:13px;color:#000;white-space:nowrap;">Ремонт электротехнических установок Том 1</div>
<div class="a" style="left:342px;top:423.19px;font-size:11px;line-height:13px;color:#000;white-space:nowrap;width:27px;text-align:right;">0</div>
<div class="a" style="left:372px;top:423.19px;font-size:11px;line-height:13px;color:#000;white-space:nowrap;width:27px;text-align:right;">0</div>
<div class="a" style="left:472px;top:423.19px;font-size:11px;line-height:13px;color:#000;white-space:nowrap;width:26px;text-align:right;">0</div>
<div class="a" style="left:501px;top:423.19px;font-size:11px;line-height:13px;color:#000;white-space:nowrap;width:27px;text-align:right;">0</div>
<div class="a" style="left:599px;top:423.19px;font-size:11px;line-height:13px;color:#000;white-space:nowrap;width:29px;text-align:center;">М</div>
<div class="a" style="left:4px;top:455px;width:846px;height:1px;background:#c6c6c6"></div>
<div class="a" style="left:340px;top:437px;width:1px;height:19px;background:#c6c6c6"></div>
<div class="a" style="left:370px;top:437px;width:1px;height:19px;background:#c6c6c6"></div>
<div class="a" style="left:400px;top:437px;width:1px;height:19px;background:#c6c6c6"></div>
<div class="a" style="left:470px;top:437px;width:1px;height:19px;background:#c6c6c6"></div>
<div class="a" style="left:499px;top:437px;width:1px;height:19px;background:#c6c6c6"></div>
<div class="a" style="left:529px;top:437px;width:1px;height:19px;background:#c6c6c6"></div>
<div class="a" style="left:598px;top:437px;width:1px;height:19px;background:#c6c6c6"></div>
<div class="a" style="left:628px;top:437px;width:1px;height:19px;background:#c6c6c6"></div>
<div class="a" style="left:664px;top:437px;width:1px;height:19px;background:#c6c6c6"></div>
<div class="a" style="left:761px;top:437px;width:1px;height:19px;background:#c6c6c6"></div>
<div class="a" style="left:849px;top:437px;width:1px;height:19px;background:#c6c6c6"></div>
<div class="a" style="left:25px;top:441.19px;font-size:11px;line-height:13px;color:#000;white-space:nowrap;">Ремонт электротехнических установок Том 2</div>
<div class="a" style="left:342px;top:441.19px;font-size:11px;line-height:13px;color:#000;white-space:nowrap;width:27px;text-align:right;">0</div>
<div class="a" style="left:372px;top:441.19px;font-size:11px;line-height:13px;color:#000;white-space:nowrap;width:27px;text-align:right;">0</div>
<div class="a" style="left:472px;top:441.19px;font-size:11px;line-height:13px;color:#000;white-space:nowrap;width:26px;text-align:right;">0</div>
<div class="a" style="left:501px;top:441.19px;font-size:11px;line-height:13px;color:#000;white-space:nowrap;width:27px;text-align:right;">0</div>
<div class="a" style="left:599px;top:441.19px;font-size:11px;line-height:13px;color:#000;white-space:nowrap;width:29px;text-align:center;">М</div>
<div class="a" style="left:4px;top:473px;width:846px;height:1px;background:#c6c6c6"></div>
<div class="a" style="left:340px;top:455px;width:1px;height:19px;background:#c6c6c6"></div>
<div class="a" style="left:370px;top:455px;width:1px;height:19px;background:#c6c6c6"></div>
<div class="a" style="left:400px;top:455px;width:1px;height:19px;background:#c6c6c6"></div>
<div class="a" style="left:470px;top:455px;width:1px;height:19px;background:#c6c6c6"></div>
<div class="a" style="left:499px;top:455px;width:1px;height:19px;background:#c6c6c6"></div>
<div class="a" style="left:529px;top:455px;width:1px;height:19px;background:#c6c6c6"></div>
<div class="a" style="left:598px;top:455px;width:1px;height:19px;background:#c6c6c6"></div>
<div class="a" style="left:628px;top:455px;width:1px;height:19px;background:#c6c6c6"></div>
<div class="a" style="left:664px;top:455px;width:1px;height:19px;background:#c6c6c6"></div>
<div class="a" style="left:761px;top:455px;width:1px;height:19px;background:#c6c6c6"></div>
<div class="a" style="left:849px;top:455px;width:1px;height:19px;background:#c6c6c6"></div>
<div class="a" style="left:25px;top:459.19px;font-size:11px;line-height:13px;color:#000;white-space:nowrap;">Ремонт электротехнических установок Том 3</div>
<div class="a" style="left:342px;top:459.19px;font-size:11px;line-height:13px;color:#000;white-space:nowrap;width:27px;text-align:right;">0</div>
<div class="a" style="left:372px;top:459.19px;font-size:11px;line-height:13px;color:#000;white-space:nowrap;width:27px;text-align:right;">0</div>
<div class="a" style="left:472px;top:459.19px;font-size:11px;line-height:13px;color:#000;white-space:nowrap;width:26px;text-align:right;">0</div>
<div class="a" style="left:501px;top:459.19px;font-size:11px;line-height:13px;color:#000;white-space:nowrap;width:27px;text-align:right;">0</div>
<div class="a" style="left:599px;top:459.19px;font-size:11px;line-height:13px;color:#000;white-space:nowrap;width:29px;text-align:center;">М</div>
<div class="a" style="left:4px;top:491px;width:846px;height:1px;background:#c6c6c6"></div>
<div class="a" style="left:340px;top:473px;width:1px;height:19px;background:#c6c6c6"></div>
<div class="a" style="left:370px;top:473px;width:1px;height:19px;background:#c6c6c6"></div>
<div class="a" style="left:400px;top:473px;width:1px;height:19px;background:#c6c6c6"></div>
<div class="a" style="left:470px;top:473px;width:1px;height:19px;background:#c6c6c6"></div>
<div class="a" style="left:499px;top:473px;width:1px;height:19px;background:#c6c6c6"></div>
<div class="a" style="left:529px;top:473px;width:1px;height:19px;background:#c6c6c6"></div>
<div class="a" style="left:598px;top:473px;width:1px;height:19px;background:#c6c6c6"></div>
<div class="a" style="left:628px;top:473px;width:1px;height:19px;background:#c6c6c6"></div>
<div class="a" style="left:664px;top:473px;width:1px;height:19px;background:#c6c6c6"></div>
<div class="a" style="left:761px;top:473px;width:1px;height:19px;background:#c6c6c6"></div>
<div class="a" style="left:849px;top:473px;width:1px;height:19px;background:#c6c6c6"></div>
<div class="a" style="left:25px;top:477.19px;font-size:11px;line-height:13px;color:#000;white-space:nowrap;">Ремонт электротехнических установок Том 4</div>
<div class="a" style="left:342px;top:477.19px;font-size:11px;line-height:13px;color:#000;white-space:nowrap;width:27px;text-align:right;">0</div>
<div class="a" style="left:372px;top:477.19px;font-size:11px;line-height:13px;color:#000;white-space:nowrap;width:27px;text-align:right;">0</div>
<div class="a" style="left:472px;top:477.19px;font-size:11px;line-height:13px;color:#000;white-space:nowrap;width:26px;text-align:right;">0</div>
<div class="a" style="left:501px;top:477.19px;font-size:11px;line-height:13px;color:#000;white-space:nowrap;width:27px;text-align:right;">0</div>
<div class="a" style="left:599px;top:477.19px;font-size:11px;line-height:13px;color:#000;white-space:nowrap;width:29px;text-align:center;">М</div>
<div class="a" style="left:4px;top:509px;width:846px;height:1px;background:#c6c6c6"></div>
<div class="a" style="left:340px;top:491px;width:1px;height:19px;background:#c6c6c6"></div>
<div class="a" style="left:370px;top:491px;width:1px;height:19px;background:#c6c6c6"></div>
<div class="a" style="left:400px;top:491px;width:1px;height:19px;background:#c6c6c6"></div>
<div class="a" style="left:470px;top:491px;width:1px;height:19px;background:#c6c6c6"></div>
<div class="a" style="left:499px;top:491px;width:1px;height:19px;background:#c6c6c6"></div>
<div class="a" style="left:529px;top:491px;width:1px;height:19px;background:#c6c6c6"></div>
<div class="a" style="left:598px;top:491px;width:1px;height:19px;background:#c6c6c6"></div>
<div class="a" style="left:628px;top:491px;width:1px;height:19px;background:#c6c6c6"></div>
<div class="a" style="left:664px;top:491px;width:1px;height:19px;background:#c6c6c6"></div>
<div class="a" style="left:761px;top:491px;width:1px;height:19px;background:#c6c6c6"></div>
<div class="a" style="left:849px;top:491px;width:1px;height:19px;background:#c6c6c6"></div>
<div class="a" style="left:25px;top:495.19px;font-size:11px;line-height:13px;color:#000;white-space:nowrap;">Ремонт электротехнических установок Том 5</div>
<div class="a" style="left:342px;top:495.19px;font-size:11px;line-height:13px;color:#000;white-space:nowrap;width:27px;text-align:right;">0</div>
<div class="a" style="left:372px;top:495.19px;font-size:11px;line-height:13px;color:#000;white-space:nowrap;width:27px;text-align:right;">0</div>
<div class="a" style="left:472px;top:495.19px;font-size:11px;line-height:13px;color:#000;white-space:nowrap;width:26px;text-align:right;">0</div>
<div class="a" style="left:501px;top:495.19px;font-size:11px;line-height:13px;color:#000;white-space:nowrap;width:27px;text-align:right;">0</div>
<div class="a" style="left:599px;top:495.19px;font-size:11px;line-height:13px;color:#000;white-space:nowrap;width:29px;text-align:center;">М</div>
<div class="a" style="left:4px;top:527px;width:846px;height:1px;background:#c6c6c6"></div>
<div class="a" style="left:340px;top:509px;width:1px;height:19px;background:#c6c6c6"></div>
<div class="a" style="left:370px;top:509px;width:1px;height:19px;background:#c6c6c6"></div>
<div class="a" style="left:400px;top:509px;width:1px;height:19px;background:#c6c6c6"></div>
<div class="a" style="left:470px;top:509px;width:1px;height:19px;background:#c6c6c6"></div>
<div class="a" style="left:499px;top:509px;width:1px;height:19px;background:#c6c6c6"></div>
<div class="a" style="left:529px;top:509px;width:1px;height:19px;background:#c6c6c6"></div>
<div class="a" style="left:598px;top:509px;width:1px;height:19px;background:#c6c6c6"></div>
<div class="a" style="left:628px;top:509px;width:1px;height:19px;background:#c6c6c6"></div>
<div class="a" style="left:664px;top:509px;width:1px;height:19px;background:#c6c6c6"></div>
<div class="a" style="left:761px;top:509px;width:1px;height:19px;background:#c6c6c6"></div>
<div class="a" style="left:849px;top:509px;width:1px;height:19px;background:#c6c6c6"></div>
<div class="a" style="left:25px;top:513.19px;font-size:11px;line-height:13px;color:#000;white-space:nowrap;">Ремонт электротехнических установок Том 6</div>
<div class="a" style="left:342px;top:513.19px;font-size:11px;line-height:13px;color:#000;white-space:nowrap;width:27px;text-align:right;">0</div>
<div class="a" style="left:372px;top:513.19px;font-size:11px;line-height:13px;color:#000;white-space:nowrap;width:27px;text-align:right;">0</div>
<div class="a" style="left:472px;top:513.19px;font-size:11px;line-height:13px;color:#000;white-space:nowrap;width:26px;text-align:right;">0</div>
<div class="a" style="left:501px;top:513.19px;font-size:11px;line-height:13px;color:#000;white-space:nowrap;width:27px;text-align:right;">0</div>
<div class="a" style="left:599px;top:513.19px;font-size:11px;line-height:13px;color:#000;white-space:nowrap;width:29px;text-align:center;">М</div>
<div class="a" style="left:4px;top:545px;width:846px;height:1px;background:#c6c6c6"></div>
<div class="a" style="left:340px;top:527px;width:1px;height:19px;background:#c6c6c6"></div>
<div class="a" style="left:370px;top:527px;width:1px;height:19px;background:#c6c6c6"></div>
<div class="a" style="left:400px;top:527px;width:1px;height:19px;background:#c6c6c6"></div>
<div class="a" style="left:470px;top:527px;width:1px;height:19px;background:#c6c6c6"></div>
<div class="a" style="left:499px;top:527px;width:1px;height:19px;background:#c6c6c6"></div>
<div class="a" style="left:529px;top:527px;width:1px;height:19px;background:#c6c6c6"></div>
<div class="a" style="left:598px;top:527px;width:1px;height:19px;background:#c6c6c6"></div>
<div class="a" style="left:628px;top:527px;width:1px;height:19px;background:#c6c6c6"></div>
<div class="a" style="left:664px;top:527px;width:1px;height:19px;background:#c6c6c6"></div>
<div class="a" style="left:761px;top:527px;width:1px;height:19px;background:#c6c6c6"></div>
<div class="a" style="left:849px;top:527px;width:1px;height:19px;background:#c6c6c6"></div>
<div class="a" style="left:25px;top:531.19px;font-size:11px;line-height:13px;color:#000;white-space:nowrap;">Ремонт электротехнических установок Том 7</div>
<div class="a" style="left:342px;top:531.19px;font-size:11px;line-height:13px;color:#000;white-space:nowrap;width:27px;text-align:right;">0</div>
<div class="a" style="left:372px;top:531.19px;font-size:11px;line-height:13px;color:#000;white-space:nowrap;width:27px;text-align:right;">0</div>
<div class="a" style="left:472px;top:531.19px;font-size:11px;line-height:13px;color:#000;white-space:nowrap;width:26px;text-align:right;">0</div>
<div class="a" style="left:501px;top:531.19px;font-size:11px;line-height:13px;color:#000;white-space:nowrap;width:27px;text-align:right;">0</div>
<div class="a" style="left:599px;top:531.19px;font-size:11px;line-height:13px;color:#000;white-space:nowrap;width:29px;text-align:center;">М</div>
<div class="a" style="left:4px;top:563px;width:846px;height:1px;background:#c6c6c6"></div>
<div class="a" style="left:340px;top:545px;width:1px;height:19px;background:#c6c6c6"></div>
<div class="a" style="left:370px;top:545px;width:1px;height:19px;background:#c6c6c6"></div>
<div class="a" style="left:400px;top:545px;width:1px;height:19px;background:#c6c6c6"></div>
<div class="a" style="left:470px;top:545px;width:1px;height:19px;background:#c6c6c6"></div>
<div class="a" style="left:499px;top:545px;width:1px;height:19px;background:#c6c6c6"></div>
<div class="a" style="left:529px;top:545px;width:1px;height:19px;background:#c6c6c6"></div>
<div class="a" style="left:598px;top:545px;width:1px;height:19px;background:#c6c6c6"></div>
<div class="a" style="left:628px;top:545px;width:1px;height:19px;background:#c6c6c6"></div>
<div class="a" style="left:664px;top:545px;width:1px;height:19px;background:#c6c6c6"></div>
<div class="a" style="left:761px;top:545px;width:1px;height:19px;background:#c6c6c6"></div>
<div class="a" style="left:849px;top:545px;width:1px;height:19px;background:#c6c6c6"></div>
<div class="a" style="left:25px;top:549.19px;font-size:11px;line-height:13px;color:#000;white-space:nowrap;">Ремонт электротехнических установок</div>
<div class="a" style="left:342px;top:549.19px;font-size:11px;line-height:13px;color:#000;white-space:nowrap;width:27px;text-align:right;">0</div>
<div class="a" style="left:372px;top:549.19px;font-size:11px;line-height:13px;color:#000;white-space:nowrap;width:27px;text-align:right;">0</div>
<div class="a" style="left:472px;top:549.19px;font-size:11px;line-height:13px;color:#000;white-space:nowrap;width:26px;text-align:right;">0</div>
<div class="a" style="left:501px;top:549.19px;font-size:11px;line-height:13px;color:#000;white-space:nowrap;width:27px;text-align:right;">0</div>
<div class="a" style="left:599px;top:549.19px;font-size:11px;line-height:13px;color:#000;white-space:nowrap;width:29px;text-align:center;">М</div>
<div class="a" style="left:4px;top:564px;width:845px;height:17px;background:#c0dcc0;border-bottom:1px solid #b9b9b9"></div>
<div class="a" style="left:849px;top:564px;width:1px;height:17px;background:#c6c6c6"></div>
<svg class="a" style="left:18px;top:568px" width="9" height="9" viewBox="0 0 9 9">
<defs><linearGradient id="pb" x1="0" y1="0" x2="0" y2="1"><stop offset="0" stop-color="#fff"/><stop offset="1" stop-color="#d8d8d8"/></linearGradient></defs>
<rect x=".5" y=".5" width="8" height="8" rx="1" fill="url(#pb)" stroke="#8f8f8f"/>
<path d="M2 4.5H7M4.5 2V7" stroke="#2c3c8c"/></svg>
<div class="a" style="left:30px;top:567.19px;font-size:11px;line-height:13px;color:#000;white-space:nowrap;font-weight:bold;letter-spacing:0.47px;-webkit-text-stroke:0.25px #000;">Пусконаладочные работы</div>
<div class="a" style="left:4px;top:581px;width:845px;height:17px;background:#c0dcc0;border-bottom:1px solid #b9b9b9"></div>
<div class="a" style="left:849px;top:581px;width:1px;height:17px;background:#c6c6c6"></div>
<svg class="a" style="left:18px;top:585px" width="9" height="9" viewBox="0 0 9 9">
<defs><linearGradient id="pb" x1="0" y1="0" x2="0" y2="1"><stop offset="0" stop-color="#fff"/><stop offset="1" stop-color="#d8d8d8"/></linearGradient></defs>
<rect x=".5" y=".5" width="8" height="8" rx="1" fill="url(#pb)" stroke="#8f8f8f"/>
<path d="M2 4.5H7M4.5 2V7" stroke="#2c3c8c"/></svg>
<div class="a" style="left:30px;top:584.19px;font-size:11px;line-height:13px;color:#000;white-space:nowrap;font-weight:bold;letter-spacing:0.47px;-webkit-text-stroke:0.25px #000;">Прочие работы</div>
<div class="a" style="left:993px;top:128px;width:15px;height:470px;background:linear-gradient(90deg,#e3e3e3,#f0f0f0 30%,#f0f0f0)"></div>
<svg class="a" style="left:997px;top:135px" width="8" height="5"><path d="M0 4H7L3.5 0.5Z" fill="#3c3c3c"/></svg>
<svg class="a" style="left:997px;top:588px" width="8" height="5"><path d="M0 0.5H7L3.5 4Z" fill="#3c3c3c"/></svg>
<div class="a" style="left:993px;top:262px;width:15px;height:240px;border:1px solid #9a9a9a;border-radius:2px;background:linear-gradient(90deg,#f2f2f2,#e2e2e2 50%,#d0d0d0)"></div>
<svg class="a" style="left:997px;top:378px" width="8" height="7"><path d="M0 .5H7M0 3.5H7M0 6.5H7" stroke="#6e6e6e"/></svg>
<div class="a" style="left:3px;top:598px;width:1007px;height:26px;background:linear-gradient(#e0eaf7,#d3dff0 45%,#bfcfe6);border-top:1px solid #7f97b8;border-left:1px solid #5f6f85;border-right:1px solid #5f6f85;border-bottom:1px solid #5f6f85;border-radius:0 0 3px 3px;box-shadow:inset 0 1px 0 #f4f8fd"></div>
<div class="a" style="left:18px;top:603.84px;font-size:12px;line-height:14px;color:#2d3b5c;white-space:nowrap;letter-spacing:-0.2px;">МДС 81-33.2004 и МДС 81-25.2001, Обычные условия строительства</div>
<svg class="a" style="left:996px;top:609px" width="12" height="12" viewBox="0 0 12 12"><g fill="#7890b4">
<rect x="6" y="1" width="2" height="2"/><rect x="2" y="5" width="2" height="2"/><rect x="6" y="5" width="2" height="2"/>
<rect x="-2" y="9" width="2" height="2"/><rect x="2" y="9" width="2" height="2"/><rect x="6" y="9" width="2" height="2"/></g></svg>
</body></html>
